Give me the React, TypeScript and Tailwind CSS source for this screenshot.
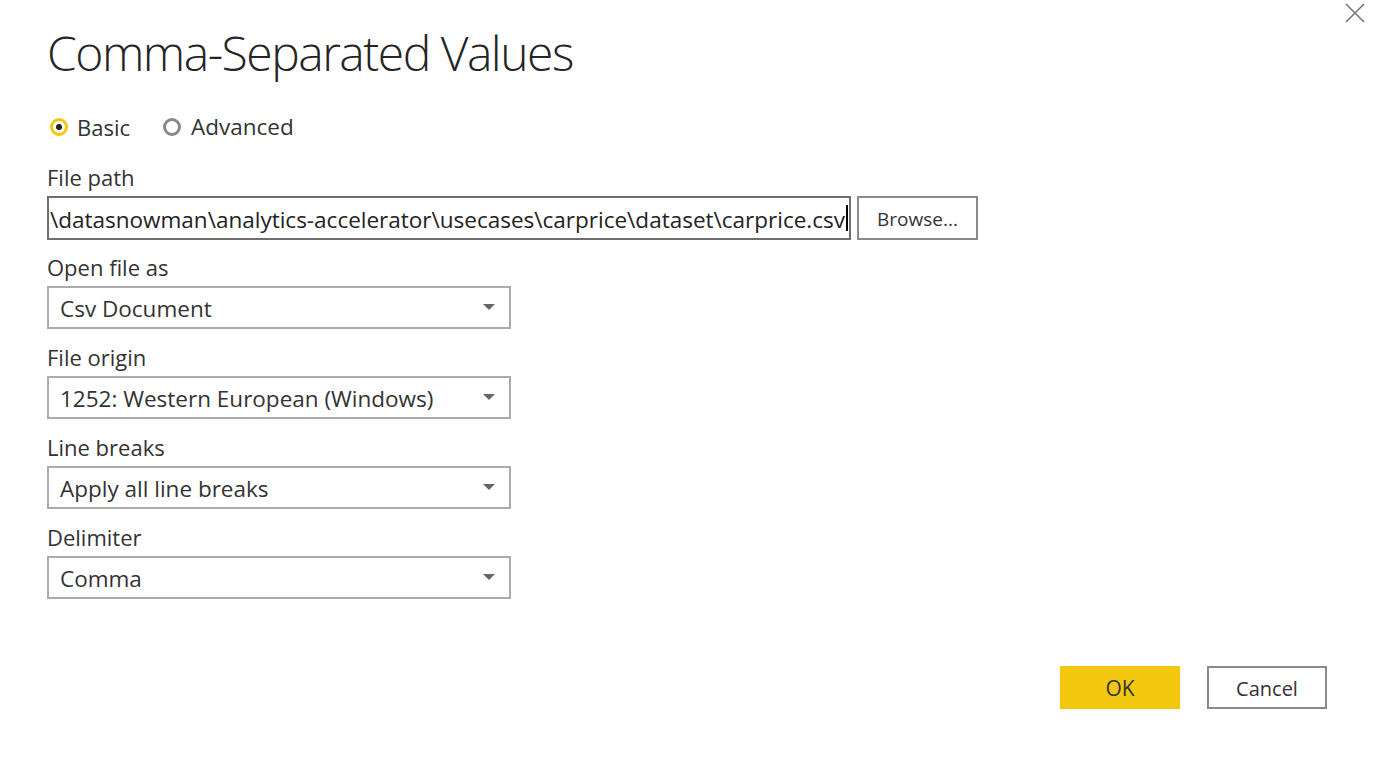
import React from "react";

const font = { fontFamily: '"Open Sans", "Noto Sans", sans-serif' };

function Select({ value }: { value: string }) {
  return (
    <div className="mt-[7px] flex h-[43px] w-[464px] items-center justify-between border-2 border-[#ababab] bg-white pl-[11px] pr-[14px]">
      <span className="pt-[4px] text-[22.5px] leading-none text-[#333]">{value}</span>
      <svg width="12" height="7" viewBox="0 0 12 7">
        <path d="M0 0 L12 0 L6 6 Z" fill="#666" />
      </svg>
    </div>
  );
}

function Field({ label, value }: { label: string; value: string }) {
  return (
    <div className="flex flex-col">
      <div className="text-[22px] leading-[24px] text-[#333]">{label}</div>
      <Select value={value} />
    </div>
  );
}

export default function App() {
  return (
    <div className="relative h-[762px] w-full overflow-hidden bg-white" style={font}>
      <button className="absolute right-[21px] top-[3px]">
        <svg width="20" height="20" viewBox="0 0 20 20">
          <path d="M1 1 L19 19 M19 1 L1 19" stroke="#777" strokeWidth="1.6" />
        </svg>
      </button>
      <div className="flex flex-col pl-[47px] pt-[24px]">
        <h1 className="text-[48px] font-light leading-[58px] tracking-[-1.5px] text-[#252525]">
          Comma-Separated Values
        </h1>
        <div className="mt-[30px] flex items-center">
          <div className="flex items-center">
            <span className="ml-[3px] flex h-[18px] w-[18px] items-center justify-center rounded-full border-[3px] border-[#f2c811]">
              <span className="h-[6px] w-[6px] rounded-full bg-[#222]" />
            </span>
            <span className="ml-[9px] text-[22px] leading-[30px] text-[#333]">Basic</span>
          </div>
          <div className="ml-[33px] flex items-center">
            <span className="h-[18px] w-[18px] rounded-full border-[3px] border-[#8a8a8a]" />
            <span className="ml-[10px] text-[22.5px] leading-[30px] text-[#333]">Advanced</span>
          </div>
        </div>
        <div className="mt-[23px] text-[22px] leading-[24px] text-[#333]">File path</div>
        <div className="mt-[7px] flex items-center">
          <div className="flex h-[44px] w-[804px] items-center overflow-hidden border-2 border-[#6e6e6e] pl-[1px]">
            <span className="whitespace-nowrap pt-[4px] text-[22.5px] leading-none text-[#222]">
              \datasnowman\analytics-accelerator\usecases\carprice\dataset\carprice.csv
            </span>
            <span className="ml-[1px] h-[26px] w-[2px] shrink-0 bg-black" />
          </div>
          <button className="ml-[6px] flex h-[44px] w-[121px] items-center justify-center border-2 border-[#8a8a8a] bg-white pt-[2px] text-[19px] text-[#333]">
            Browse...
          </button>
        </div>
        <div className="mt-[15px] flex flex-col gap-[16px]">
          <Field label="Open file as" value="Csv Document" />
          <Field label="File origin" value="1252: Western European (Windows)" />
          <Field label="Line breaks" value="Apply all line breaks" />
          <Field label="Delimiter" value="Comma" />
        </div>
      </div>
      <div className="absolute bottom-[53px] right-[59px] flex gap-[27px]">
        <button className="flex h-[43px] w-[120px] items-center justify-center bg-[#f2c811] pt-[3px] text-[21px] text-[#333]">
          OK
        </button>
        <button className="flex h-[43px] w-[120px] items-center justify-center border-2 border-[#8a8a8a] bg-white pt-[3px] text-[20px] text-[#333]">
          Cancel
        </button>
      </div>
    </div>
  );
}
